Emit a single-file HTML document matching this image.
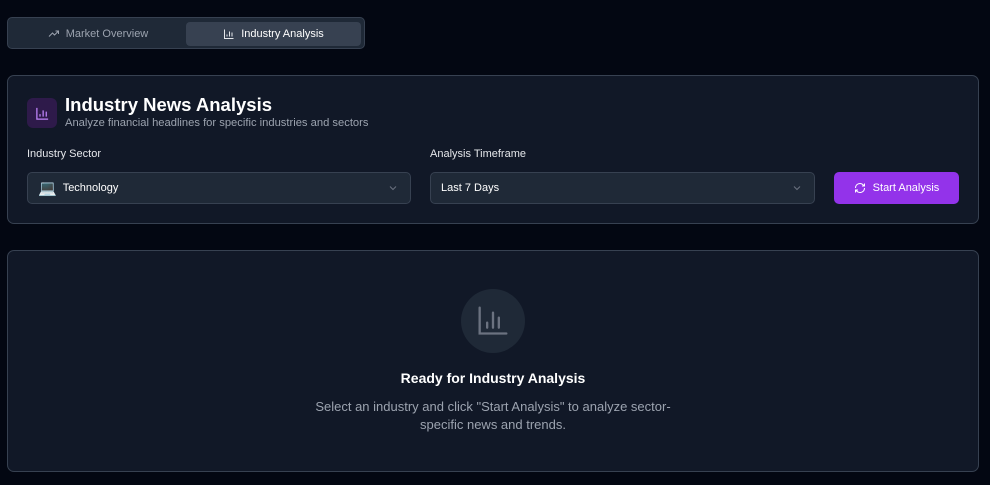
<!DOCTYPE html>
<html><head><style>
*{box-sizing:border-box;margin:0;padding:0}
body{width:990px;height:485px;background:#030712;font-family:"Liberation Sans",sans-serif;position:relative;overflow:hidden;color:#fff}
.abs{position:absolute}
.tabs{left:7px;top:17px;width:358px;height:32px;background:#1f2937;border:1px solid #374151;border-radius:5px}
.tab{top:4px;height:24px;display:flex;align-items:center;justify-content:center;font-size:11px;gap:6px}
.card{left:7px;width:972px;background:#111827;border:1px solid #374151;border-radius:7px}
.sel{top:96px;height:32px;background:#1f2937;border:1px solid #374151;border-radius:5px;display:flex;align-items:center;padding-left:10px;font-size:11px}
.chev{position:absolute;right:12px;top:11px}
.lbl{font-size:11px;color:#e5e7eb;top:72px}
</style></head><body>
<div class="abs tabs">
 <div class="abs tab" style="left:4px;width:172px;color:#9ca3af">
  <svg width="12" height="12" viewBox="0 0 24 24" fill="none" stroke="#9ca3af" stroke-width="2"><path d="M2 17l7-7 4 4 8-8M15 6h6v6"/></svg>Market Overview</div>
 <div class="abs tab" style="left:178px;width:175px;background:#374151;border-radius:4px;color:#fff">
  <svg width="12" height="12" viewBox="0 0 24 24" fill="none" stroke="#e5e7eb" stroke-width="2"><path d="M3 3v18h18M8 17v-4M13 17V7M18 17v-8"/></svg>Industry Analysis</div>
</div>
<div class="abs card" style="top:75px;height:149px">
 <div class="abs" style="left:19px;top:22px;width:30px;height:30px;background:#2e1a4a;border-radius:6px;display:flex;align-items:center;justify-content:center">
  <svg width="15" height="15" viewBox="0 0 24 24" fill="none" stroke="#c084fc" stroke-width="2"><path d="M3 3v18h18M8 17v-4M13 17V7M18 17v-8"/></svg></div>
 <div class="abs" style="left:57px;top:18px;font-size:18.5px;font-weight:bold;color:#fff">Industry News Analysis</div>
 <div class="abs" style="left:57px;top:41px;font-size:11.2px;color:#9ca3af">Analyze financial headlines for specific industries and sectors</div>
 <div class="abs lbl" style="left:19px">Industry Sector</div>
 <div class="abs lbl" style="left:422px">Analysis Timeframe</div>
 <div class="abs sel" style="left:19px;width:384px"><span style="font-size:15px;margin-right:6px">💻</span>Technology
  <svg class="chev" width="10" height="8" viewBox="0 0 10 8" fill="none" stroke="#6b7280" stroke-width="1"><path d="M2 2.5l3 3 3-3"/></svg></div>
 <div class="abs sel" style="left:422px;width:385px">Last 7 Days
  <svg class="chev" width="10" height="8" viewBox="0 0 10 8" fill="none" stroke="#6b7280" stroke-width="1"><path d="M2 2.5l3 3 3-3"/></svg></div>
 <div class="abs" style="left:826px;top:96px;width:125px;height:32px;background:#9333ea;border-radius:5px;display:flex;align-items:center;justify-content:center;gap:7px;font-size:11px">
  <svg width="12" height="12" viewBox="0 0 24 24" fill="none" stroke="#fff" stroke-width="2"><path d="M21 12a9 9 0 0 1-15.5 6.2L3 16M3 12a9 9 0 0 1 15.5-6.2L21 8M21 3v5h-5M3 21v-5h5"/></svg>Start Analysis</div>
</div>
<div class="abs card" style="top:250px;height:222px">
 <div class="abs" style="left:453px;top:38px;width:64px;height:64px;border-radius:50%;background:#1f2937;display:flex;align-items:center;justify-content:center">
  <svg width="40" height="40" viewBox="0 0 24 24" fill="none" stroke="#6b7280" stroke-width="1.4" stroke-linecap="round"><path d="M4 4v15.5h16M8.5 16v-3M12 16V7M15.5 16v-6"/></svg></div>
 <div class="abs" style="left:0;width:970px;top:119px;text-align:center;font-size:14px;font-weight:bold">Ready for Industry Analysis</div>
 <div class="abs" style="left:0;width:970px;top:147px;text-align:center;font-size:13px;line-height:18px;color:#9ca3af">Select an industry and click "Start Analysis" to analyze sector-<br>specific news and trends.</div>
</div>
</body></html>
